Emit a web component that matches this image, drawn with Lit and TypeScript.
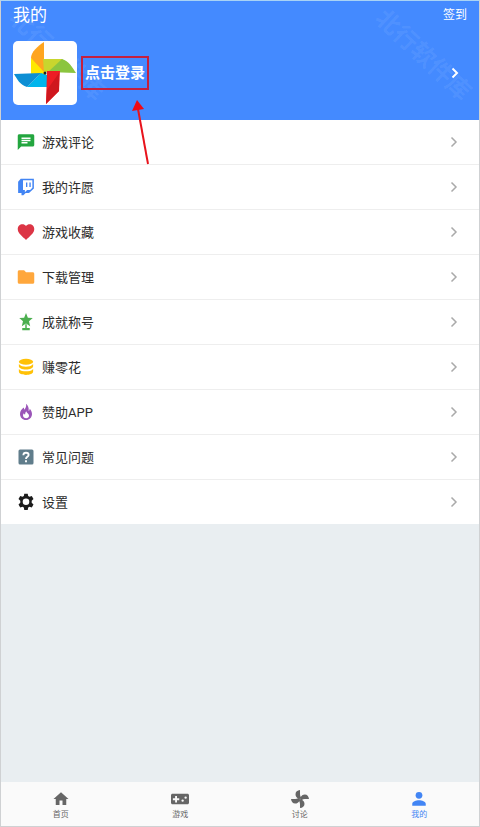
import { LitElement, html, css, svg, nothing, type TemplateResult } from "lit";
import { customElement, property } from "lit/decorators.js";
import { classMap } from "lit/directives/class-map.js";

interface Entry {
  label: string;
  tone: string;
  icon: TemplateResult;
}

const entries: Entry[] = [
  {
    label: "游戏评论",
    tone: "green",
    icon: svg`<path d="M21 1.500H3c-1.100 0-2 .9-2 2V22.500l4.500-4.500H21c1.100 0 2-.9 2-2V3.500c0-1.100-.9-2-2-2zM6 9h12v2H6V9zm8 5H6v-2h8v2zm4-6H6V6h12v2z"/>`,
  },
  {
    label: "我的许愿",
    tone: "blue",
    icon: svg`<path fill-rule="evenodd" d="M5 1L1.500 5v15H6v3h2.500l3-3H16l6.500-6V1H5zm3 2h12.500v10l-3 3h-4l-3 3v-3H8V3z"/><path d="M12 6h1.800v6H12zM16.500 6h1.800v6h-1.800z"/>`,
  },
  {
    label: "游戏收藏",
    tone: "red",
    icon: svg`<path d="M12 22.500l-1.500-1.350C4.500 15.700 1 12.500 1 8 1 4.500 3.800 1.800 7.200 1.800c1.900 0 3.700.9 4.800 2.300 1.100-1.400 2.900-2.300 4.800-2.300C20.200 1.800 23 4.500 23 8c0 4.500-3.500 7.700-9.500 13.150L12 22.500z"/>`,
  },
  {
    label: "下载管理",
    tone: "orange",
    icon: svg`<path d="M9.500 3H3C1.900 3 1 3.900 1 5v14c0 1.100.9 2 2 2h18c1.100 0 2-.9 2-2V7.500c0-1.100-.9-2-2-2h-9L9.500 3z"/>`,
  },
  {
    label: "成就称号",
    tone: "leaf",
    icon: svg`<path d="M12 0l2.500 6.300 6.500.5-5 4.300 1.600 6.400L12 14l-5.600 3.500L8 11.100 3 6.800l6.500-.5zM11 15h2v5h4v3H7v-3h4z"/>`,
  },
  {
    label: "赚零花",
    tone: "gold",
    icon: svg`<ellipse cx="12" cy="5" rx="9.500" ry="4"/><path d="M2.500 8c2 3 6 3.500 9.500 3.500S19.500 11 21.500 8v3c0 2.500-4 4.300-9.500 4.300S2.500 13.500 2.500 11zM2.500 14.500c2 3 6 3.300 9.500 3.300s7.500-.3 9.500-3.300V18c0 2.700-4 4.500-9.500 4.500S2.500 20.700 2.500 18z"/>`,
  },
  {
    label: "赞助APP",
    tone: "purple",
    icon: svg`<path fill-rule="evenodd" d="M12 1c1 4-1 5.500-2 8-.6-1-.8-2-.7-3C6 8 4 11 4 14.500 4 19 7.500 22.500 12 22.500s8-3.500 8-8c0-3-1.500-5.500-3-7-.1 1.500-.6 2.500-1.500 3C16 7 15 3 12 1zm.5 10c-.2 2 3.500 3 3.500 6 0 2-1.600 3.300-3.700 3.300-2.300 0-4.300-1.500-4.300-3.900 0-1.200.5-2.200 1.200-2.900.2 1 .8 1.600 1.500 1.700.6-1.500.2-3 1.800-4.200z"/>`,
  },
  {
    label: "常见问题",
    tone: "slate",
    icon: svg`<rect x="2" y="2" width="20" height="20" rx="2"/><path class="hollow" d="M8.500 9.500c0-2 1.500-3.200 3.500-3.200s3.500 1.200 3.500 3c0 2.500-3.500 2.500-3.500 5.200M12 16.300v2.600"/>`,
  },
  {
    label: "设置",
    tone: "black",
    icon: svg`<path fill-rule="evenodd" d="M9.700 1h4.600l.6 3.100 1.800 1 3-1 2.300 4-2.400 2.100v2.900l2.400 2.200-2.300 3.900-3-1-1.800 1.100-.6 3.200H9.700l-.6-3.200-1.800-1.100-3 1L2 15.300l2.400-2.200v-2.900L2 8.100l2.300-4 3 1 1.800-1L9.700 1zM12 7.300a4.400 4.400 0 1 0 0 8.800 4.400 4.400 0 0 0 0-8.800z"/>`,
  },
];

const tabs = [
  { label: "首页", icon: svg`<path d="M10 20v-6h4v6h5v-8h3L12 3 2 12h3v8z"/>` },
  {
    label: "游戏",
    icon: svg`<path fill-rule="evenodd" d="M2 5h20c1.100 0 2 .9 2 2v10c0 1.100-.9 2-2 2H2c-1.100 0-2-.9-2-2V7c0-1.100.9-2 2-2zM5.500 8v3h-3v2.500h3v3H8v-3h3V11H8V8zm10 4.500a1.600 1.600 0 1 0 0 3.200 1.600 1.600 0 0 0 0-3.200zm4-4a1.600 1.600 0 1 0 0 3.200 1.600 1.600 0 0 0 0-3.200z"/>`,
  },
  {
    label: "讨论",
    icon: svg`${[0, 90, 180, 270].map(
      (turn) => svg`<path transform="rotate(${turn} 12 12)" d="M10.500 11.500C7.500 10.500 6 8 6 5.500 6 2.500 8.500.3 12 0v5.500c0 1.600.6 3 1.500 4.500L12 12z"/>`,
    )}`,
  },
  {
    label: "我的",
    icon: svg`<circle cx="12" cy="7" r="4.500"/><path d="M12 13.500c-4 0-9 1.700-9 4.800V21h18v-2.700c0-3.100-5-4.800-9-4.800z"/>`,
  },
];

const chevron = html`<svg class="chevron" viewBox="0 0 12 12" aria-hidden="true"><path d="M3.500 1.500L8 6l-4.500 4.500"/></svg>`;

@customElement("profile-header")
export class ProfileHeader extends LitElement {
  static styles = css`
    :host {
      display: block;
      position: relative;
      overflow: hidden;
      box-sizing: border-box;
      padding: 3px 12px 15px;
      background: #448aff;
      color: #fff;
    }
    button {
      border: 0;
      padding: 0;
      background: none;
      color: inherit;
      font: inherit;
      cursor: pointer;
    }
    .bar,
    .account {
      display: flex;
      align-items: center;
      justify-content: space-between;
    }
    .bar {
      height: 22px;
      margin-bottom: 15px;
    }
    h1 {
      margin: 0;
      font-size: 17px;
      font-weight: 400;
      line-height: 22px;
    }
    .sign {
      font-size: 12px;
      line-height: 22px;
    }
    .account {
      position: relative;
      width: 100%;
      text-align: left;
    }
    .avatar {
      width: 64px;
      height: 64px;
      border-radius: 5px;
      background: #fff;
      overflow: hidden;
    }
    .login {
      margin: 0 auto 0 4px;
      border: 2px solid #c4203f;
      padding: 0 2px;
      font-size: 15px;
      font-weight: 700;
      line-height: 30px;
    }
    .chevron {
      width: 12px;
      height: 12px;
      margin-right: 6px;
      fill: none;
      stroke: #fff;
      stroke-width: 2;
    }
    .mark {
      position: absolute;
      top: 41px;
      font-size: 24px;
      font-weight: 700;
      line-height: 26px;
      white-space: nowrap;
      color: rgb(255 255 255 / 8%);
      transform: rotate(43deg);
      pointer-events: none;
    }
    .mark.start {
      left: -4px;
    }
    .mark.end {
      right: -4px;
    }
  `;

  render() {
    return html`
      <span class="mark start" aria-hidden="true">北行软件库</span>
      <span class="mark end" aria-hidden="true">北行软件库</span>
      <div class="bar">
        <h1>我的</h1>
        <button class="sign" type="button">签到</button>
      </div>
      <button class="account" type="button">
        <svg class="avatar" viewBox="0 0 64 64" aria-hidden="true">
          <path fill="#ffe800" d="M18 17l13 6 2 11-15 1z" />
          <path fill="#ffa51f" d="M31 1v30L18 17c0-6 7-12 13-16z" />
          <path fill="#c8d62e" d="M30 18h20L36 31h-5z" />
          <path fill="#8bc53f" d="M49 18c7 2 10 8 14 14l-28-1z" />
          <path fill="#00b5ec" d="M28 32l6 2v12H14z" />
          <path fill="#0d8fd4" d="M1 33l27-1-14 14C7 44 4 38 1 33z" />
          <path fill="#ed1c24" d="M34 30h13l-1 20-13 13z" />
          <path fill="#cf171e" d="M46 32v18L33 63l1-14z" />
          <circle cx="32" cy="32" r="1.500" fill="#222" />
        </svg>
        <span class="login">点击登录</span>
        ${chevron}
      </button>
    `;
  }
}

@customElement("menu-row")
export class MenuRow extends LitElement {
  @property({ attribute: false }) entry!: Entry;

  static styles = css`
    :host {
      display: block;
    }
    button {
      display: flex;
      align-items: center;
      width: 100%;
      height: 44px;
      border: 0;
      padding: 0 19px 0 16px;
      background: none;
      color: #2c2c2c;
      font: inherit;
      font-size: 13px;
      text-align: left;
      cursor: pointer;
    }
    .icon {
      width: 18px;
      height: 18px;
      margin-right: 7px;
      fill: currentColor;
    }
    .label {
      flex: 1;
      padding-top: 2px;
      line-height: 20px;
    }
    .chevron {
      width: 12px;
      height: 12px;
      fill: none;
      stroke: #aaa;
      stroke-width: 1.500;
    }
    .hollow {
      fill: none;
      stroke: #fff;
      stroke-width: 2.500;
    }
    .green { color: #23a63f; }
    .blue { color: #4285f4; }
    .red { color: #dc3545; }
    .orange { color: #ffa73c; }
    .leaf { color: #4caf50; }
    .gold { color: #ffc107; }
    .purple { color: #9b55b8; }
    .slate { color: #607d8b; }
    .black { color: #1c1c1c; }
  `;

  render() {
    return html`<button type="button">
      <svg class="icon ${this.entry.tone}" viewBox="0 0 24 24" aria-hidden="true">${this.entry.icon}</svg>
      <span class="label">${this.entry.label}</span>
      ${chevron}
    </button>`;
  }
}

@customElement("tab-bar")
export class TabBar extends LitElement {
  @property() current = "我的";

  static styles = css`
    :host {
      display: block;
      background: #fafafa;
    }
    nav {
      display: grid;
      grid-template-columns: repeat(4, 1fr);
    }
    a {
      display: flex;
      flex-direction: column;
      align-items: center;
      padding: 8px 0 5px;
      color: #666;
      font-size: 8px;
      line-height: 12px;
      text-decoration: none;
    }
    a.current {
      color: #4285f4;
    }
    svg {
      width: 18px;
      height: 18px;
      margin-bottom: 1px;
      fill: currentColor;
    }
  `;

  render() {
    return html`<nav>
      ${tabs.map(
        (tab) => html`<a
          href="#"
          class=${classMap({ current: tab.label === this.current })}
          aria-current=${tab.label === this.current ? "page" : nothing}
          ><svg viewBox="0 0 24 24" aria-hidden="true">${tab.icon}</svg>${tab.label}</a
        >`,
      )}
    </nav>`;
  }
}

@customElement("app-root")
export class AppRoot extends LitElement {
  static styles = css`
    :host {
      display: flex;
      flex-direction: column;
      position: relative;
      box-sizing: border-box;
      min-height: 100vh;
      border: 1px solid #cfd1d3;
      border-top-color: #a9d3f5;
      background: #e9eef1;
      font-family: Roboto, "Noto Sans CJK SC", sans-serif;
    }
    ul {
      margin: 0;
      padding: 0;
      list-style: none;
      background: #fff;
    }
    li + li {
      border-top: 1px solid #eee;
    }
    tab-bar {
      margin-top: auto;
    }
    .pointer {
      position: absolute;
      top: 98px;
      left: 130px;
      width: 20px;
      height: 68px;
      pointer-events: none;
    }
  `;

  render() {
    return html`
      <profile-header></profile-header>
      <ul>
        ${entries.map((entry) => html`<li><menu-row .entry=${entry}></menu-row></li>`)}
      </ul>
      <tab-bar></tab-bar>
      <svg class="pointer" viewBox="0 0 20 68" aria-hidden="true">
        <path d="M7 10L17 65" stroke="#e8131c" stroke-width="2" />
        <path d="M6 1L1 12L13 10Z" fill="#f00a14" />
      </svg>
    `;
  }
}
